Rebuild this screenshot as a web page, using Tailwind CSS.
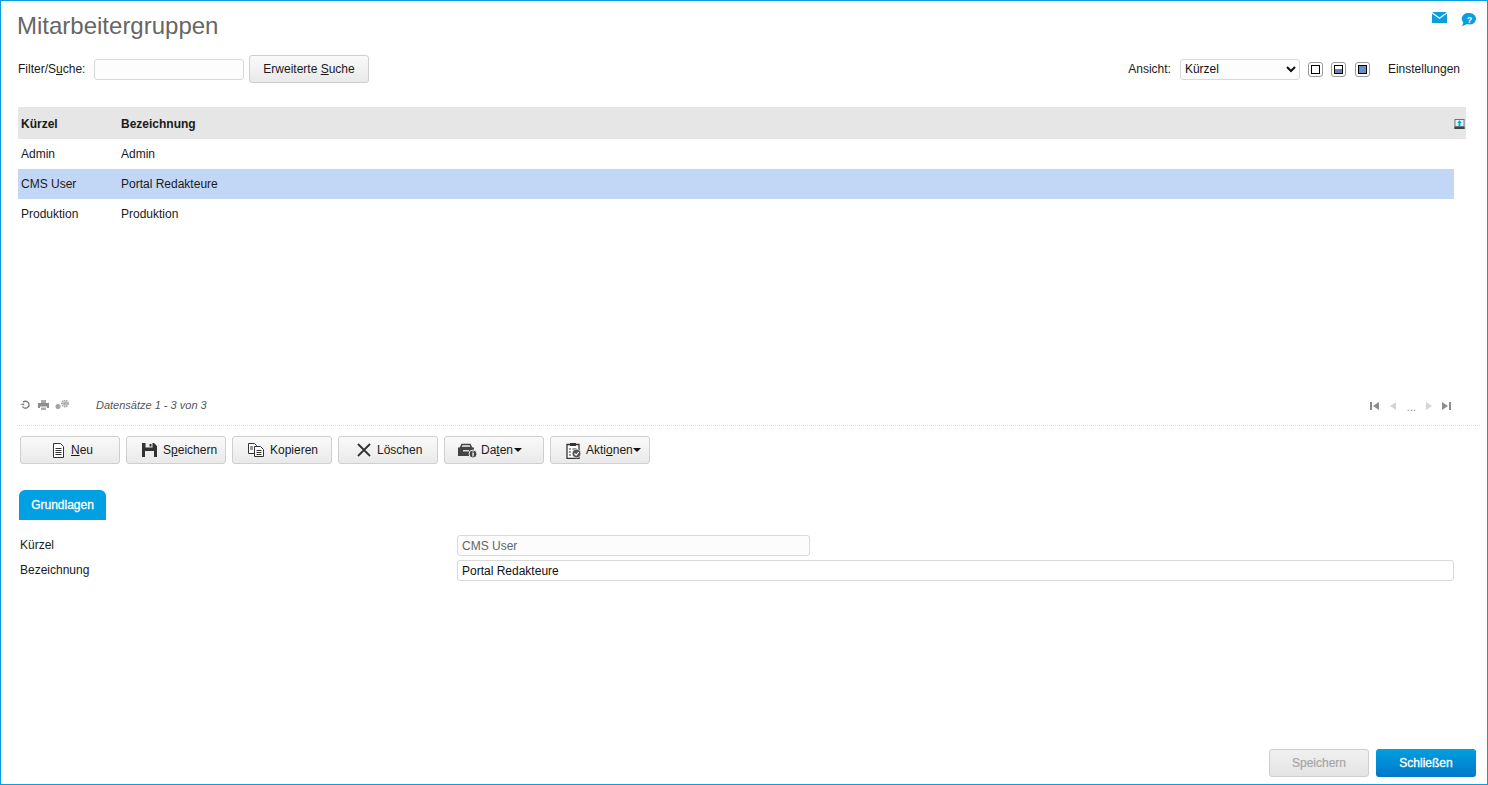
<!DOCTYPE html>
<html lang="de">
<head>
  <meta charset="UTF-8">
  <title>Mitarbeitergruppen</title>
  <script src="https://cdn.jsdelivr.net/npm/@tailwindcss/browser@4"></script>
</head>
<body class="bg-white">
  <div class="w-[1488px] h-[785px] border border-[#0a9ee0] flex flex-col overflow-hidden bg-white text-[12px] text-[#1a1a1a] font-['Liberation_Sans',Arial,sans-serif]">

    <!-- Title -->
    <div class="flex justify-between items-start h-[54px] pl-[16px] pr-[11px]">
      <h1 class="text-[24px] leading-[28px] mt-[11px] text-[#666666]">Mitarbeitergruppen</h1>
      <div class="flex items-start gap-[14px] mt-[11px]">
        <svg width="15" height="11" viewBox="0 0 15 11"><path d="M0 0h15L7.500 5.500z" fill="#0a9ee0"/><path d="M0 1.500l7.500 5.500 7.500-5.500V11H0z" fill="#0a9ee0"/></svg>
        <svg class="mt-[1px]" width="15" height="13" viewBox="0 0 15 13"><path d="M8.500 0a6.500 5.800 0 0 1 0 11.600c-1 0-2-.2-2.800-.5C4.500 12.200 2.500 13 .5 13c.9-.8 1.600-2 1.800-3.600A6.500 5.800 0 0 1 8.500 0z" fill="#0a9ee0"/><text x="8.500" y="9.500" text-anchor="middle" fill="#fff" font-size="9" font-weight="700" font-family="Liberation Sans">?</text></svg>
      </div>
    </div>

    <!-- Filter row -->
    <div class="flex items-center justify-between h-[28px] pl-[17px] pr-[27px]">
      <div class="flex items-center">
        <span class="w-[76px]">Filter/S<u>u</u>che:</span>
        <input class="w-[150px] h-[21px] border border-[#d9d9d9] rounded-[3px] bg-[#fdfdfd] mr-[5px]">
        <button class="w-[120px] h-[28px] border border-[#cfcfcf] rounded-[3px] bg-gradient-to-b from-[#fafafa] to-[#e9e9e9]">Erweiterte <u>S</u>uche</button>
      </div>
      <div class="flex items-center">
        <span class="mr-[9px]">Ansicht:</span>
        <select class="w-[120px] h-[21px] border border-[#d9d9d9] rounded-[3px] bg-[#fdfdfd] pl-0 text-[12px] text-[#111] mr-[8px]"><option>Kürzel</option></select>
        <span class="w-[15px] h-[15px] border border-[#9a9a9a] rounded-[3px] flex items-center justify-center mr-[8px]"><span class="block w-[9px] h-[9px] border border-black bg-white"></span></span>
        <span class="w-[15px] h-[15px] border border-[#9a9a9a] rounded-[3px] flex items-center justify-center mr-[9px]"><span class="block w-[9px] h-[9px] border border-black bg-gradient-to-b from-white from-50% to-[#6b80b5] to-50%"></span></span>
        <span class="w-[15px] h-[15px] border border-[#9a9a9a] rounded-[3px] flex items-center justify-center mr-[18px]"><span class="block w-[9px] h-[9px] border border-black bg-[#6b8fcb]"></span></span>
        <span>Einstellungen</span>
      </div>
    </div>

    <!-- Table -->
    <div class="mt-[24px] ml-[17px] w-[1448px] h-[122px]">
      <div class="flex items-center h-[32px] pt-[2px] bg-[#e6e6e6] font-bold pr-[1px]">
        <span class="w-[103px] pl-[3px]">Kürzel</span>
        <span class="flex-1">Bezeichnung</span>
        <svg width="11" height="10" viewBox="0 0 11 11"><rect width="11" height="11" fill="#5f6b70"/><rect x="1" y="1" width="9" height="7" fill="#dff1fb"/><path d="M5.500 1.500L8 4.500H6.500V8h-2V4.500H3z" fill="#0a9ee0"/><rect x="0" y="8.500" width="11" height="2.500" fill="#3d4548"/></svg>
      </div>
      <div class="flex items-center h-[30px] w-[1436px]"><span class="w-[103px] pl-[3px]">Admin</span><span>Admin</span></div>
      <div class="flex items-center h-[30px] w-[1436px] bg-[#c2d7f6]"><span class="w-[103px] pl-[3px]">CMS User</span><span>Portal Redakteure</span></div>
      <div class="flex items-center h-[30px] w-[1436px]"><span class="w-[103px] pl-[3px]">Produktion</span><span>Produktion</span></div>
    </div>

    <!-- Pager -->
    <div class="flex items-center justify-between h-[20px] mt-[166px] pl-[19px] pr-[36px]">
      <div class="flex items-center">
        <svg class="mr-[7px]" width="11" height="10" viewBox="0 0 11 10"><path d="M3 2.300A3.500 3.500 0 1 1 2.500 6.500" fill="none" stroke="#777" stroke-width="1.300"/><path d="M0 3.800h4.200V6z" fill="#777" transform="rotate(-10 2 5)"/></svg>
        <svg class="mr-[6px]" width="11" height="10" viewBox="0 0 11 10"><path d="M3 0h5v3H3z" fill="#aaa"/><path d="M0 3h11v5H9V6.500H2V8H0z" fill="#8c8c8c"/><path d="M3 7.500h5V10H3z" fill="#aaa"/></svg>
        <svg class="mr-[27px]" width="14" height="10" viewBox="0 0 14 10"><circle cx="3" cy="6.500" r="2.500" fill="#a3a3a3"/><circle cx="10" cy="3.500" r="3" fill="none" stroke="#a3a3a3" stroke-width="1.800" stroke-dasharray="1.500 .6"/><circle cx="10" cy="3.500" r="2" fill="#b0b0b0"/></svg>
        <span class="italic text-[11px] text-[#555]">Datensätze 1 - 3 von 3</span>
      </div>
      <div class="flex items-center text-[#888] mt-[2px]">
        <svg class="mr-[11px]" width="9" height="8" viewBox="0 0 9 8"><path d="M0 0h2v8H0zM9 0v8L3 4z" fill="#8c8c8c"/></svg>
        <svg class="mr-[11px]" width="6" height="8" viewBox="0 0 6 8"><path d="M6 0v8L0 4z" fill="#d4d4d4"/></svg>
        <span class="text-[11px] leading-none mr-[10px] mt-[2px]">...</span>
        <svg class="mr-[10px]" width="6" height="8" viewBox="0 0 6 8"><path d="M0 0v8l6-4z" fill="#d4d4d4"/></svg>
        <svg width="9" height="8" viewBox="0 0 9 8"><path d="M0 0v8l6-4zM7 0h2v8H7z" fill="#8c8c8c"/></svg>
      </div>
    </div>

    <div class="mt-[10px] ml-[16px] mr-[7px] border-t border-dotted border-[#dddddd]"></div>

    <!-- Toolbar -->
    <div class="flex gap-[6px] mt-[10px] ml-[19px]">
      <button class="w-[100px] h-[28px] pl-[31px] border border-[#cfcfcf] rounded-[3px] bg-gradient-to-b from-[#fafafa] to-[#e9e9e9] flex items-center gap-[6px]">
        <svg width="13" height="15" viewBox="0 0 13 15"><path d="M1.500.5h7l3 3v11h-10z" fill="#fff" stroke="#333"/><path d="M3.500 5.500h6M3.500 7.500h6M3.500 9.500h6M3.500 11.500h6" stroke="#333"/></svg>
        <span><u>N</u>eu</span>
      </button>
      <button class="w-[100px] h-[28px] pl-[15px] border border-[#cfcfcf] rounded-[3px] bg-gradient-to-b from-[#fafafa] to-[#e9e9e9] flex items-center gap-[6px]">
        <svg width="15" height="14" viewBox="0 0 15 14"><path d="M0 0h12l3 3v11H0z" fill="#333"/><rect x="3.500" y="0" width="7" height="4.500" fill="#eee"/><rect x="7.500" y="1" width="2" height="2.500" fill="#333"/><rect x="3" y="8" width="9" height="6" fill="#eee"/></svg>
        <span>S<u>p</u>eichern</span>
      </button>
      <button class="w-[100px] h-[28px] pl-[15px] border border-[#cfcfcf] rounded-[3px] bg-gradient-to-b from-[#fafafa] to-[#e9e9e9] flex items-center gap-[6px]">
        <svg width="16" height="14" viewBox="0 0 16 14"><path d="M.5.500h6l2 2v8h-8z" fill="#fff" stroke="#333"/><path d="M6.500 3.500h6l3 3v7h-9z" fill="#fff" stroke="#333"/><path d="M8.500 7.500h5M8.500 9.500h5M8.500 11.500h5M2 4h3M2 6h3" stroke="#333"/></svg>
        <span>Kopieren</span>
      </button>
      <button class="w-[100px] h-[28px] pl-[18px] border border-[#cfcfcf] rounded-[3px] bg-gradient-to-b from-[#fafafa] to-[#e9e9e9] flex items-center gap-[6px]">
        <svg width="14" height="14" viewBox="0 0 14 14"><path d="M1 1l12 12M13 1L1 13" stroke="#333" stroke-width="1.800"/></svg>
        <span>Löschen</span>
      </button>
      <button class="w-[100px] h-[28px] pl-[13px] border border-[#cfcfcf] rounded-[3px] bg-gradient-to-b from-[#fafafa] to-[#e9e9e9] flex items-center gap-[4px]">
        <svg width="19" height="15" viewBox="0 0 19 15"><path d="M4 1.500h8l1.500 3h-11z" fill="none" stroke="#444" stroke-width="1.500"/><path d="M0 4.500h16v8.500H0z" fill="#444"/><rect x="5" y="7" width="6" height="1.500" fill="#ddd"/><circle cx="15" cy="11" r="4" fill="#444" stroke="#eee"/><rect x="14.400" y="10" width="1.300" height="3.500" fill="#fff"/><rect x="14.400" y="8.300" width="1.300" height="1.200" fill="#fff"/></svg>
        <span>Da<u>t</u>en</span><span class="w-0 h-0 -ml-[3px] border-x-[4px] border-x-transparent border-t-[4px] border-t-[#111]"></span>
      </button>
      <button class="w-[100px] h-[28px] pl-[15px] border border-[#cfcfcf] rounded-[3px] bg-gradient-to-b from-[#fafafa] to-[#e9e9e9] flex items-center gap-[4px]">
        <svg width="16" height="17" viewBox="0 0 16 17"><path d="M1 2.500h12v14H1z" fill="#fff" stroke="#333" stroke-width="1.300"/><path d="M4 1h6v3H4z" fill="#333"/><path d="M3 7h2M3 10h2M3 13h2M6.500 7h4" stroke="#333"/><circle cx="10.500" cy="11.500" r="4.300" fill="#555" stroke="#eee" stroke-width=".6"/><path d="M8.500 11.500l1.600 1.600 2.700-3" fill="none" stroke="#fff" stroke-width="1.200"/></svg>
        <span>Akti<u>o</u>nen</span><span class="w-0 h-0 -ml-[4px] border-x-[4px] border-x-transparent border-t-[4px] border-t-[#111]"></span>
      </button>
    </div>

    <!-- Tab -->
    <div class="mt-[26px] ml-[18px] w-[87px] h-[30px] bg-[#00a0e3] rounded-t-[6px] flex items-center justify-center text-white [-webkit-text-stroke:0.3px_white]">Grundlagen</div>

    <!-- Form -->
    <div class="mt-[15px] ml-[19px] w-[1434px] flex flex-col gap-[4px]">
      <div class="flex items-start h-[21px]">
        <span class="w-[437px] leading-[20px]">Kürzel</span>
        <input class="w-[353px] h-[21px] border border-[#d9d9d9] rounded-[3px] bg-[#fcfcfc] px-[4px] text-[12px] text-[#666]" value="CMS User" readonly>
      </div>
      <div class="flex items-start h-[21px]">
        <span class="w-[437px] leading-[20px]">Bezeichnung</span>
        <input class="flex-1 h-[21px] border border-[#d9d9d9] rounded-[3px] bg-white px-[4px] text-[12px] text-[#111]" value="Portal Redakteure">
      </div>
    </div>

    <!-- Footer -->
    <div class="mt-auto mb-[7px] mr-[11px] flex justify-end gap-[7px]">
      <button class="w-[100px] h-[28px] border border-[#cfcfcf] rounded-[3px] bg-gradient-to-b from-[#f0f0f0] to-[#e4e4e4] text-[#a6a6a6] [-webkit-text-stroke:0.2px_#a6a6a6]">Speichern</button>
      <button class="w-[100px] h-[28px] rounded-[3px] bg-gradient-to-b from-[#009fe0] to-[#0078c8] text-white [-webkit-text-stroke:0.3px_white]">Schließen</button>
    </div>
  </div>
</body>
</html>
